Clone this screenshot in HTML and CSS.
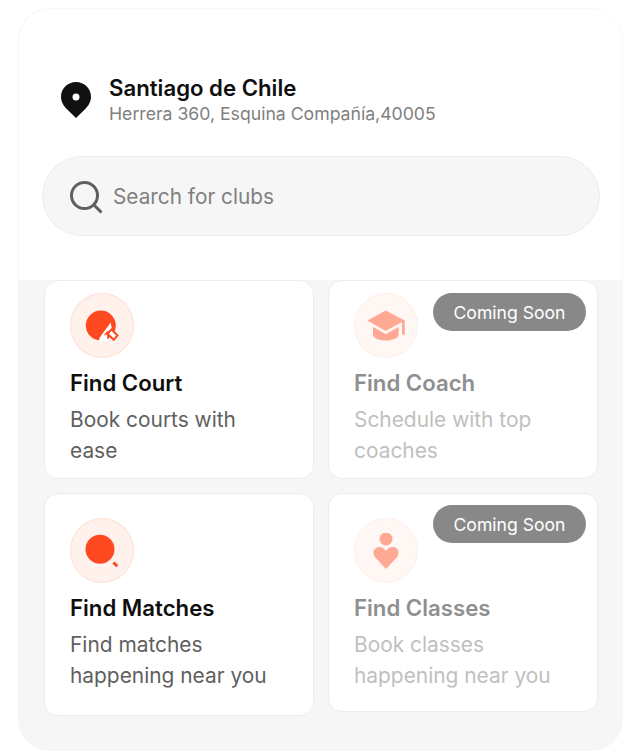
FILE: index.html
```html
<!DOCTYPE html>
<html lang="en">
<head>
<meta charset="utf-8">
<title>Find clubs</title>
<link rel="stylesheet" href="styles.css">
</head>
<body>
<main class="frame">
  <header class="top">
    <div class="location">
      <svg class="pin" width="30" height="36" viewBox="0 0 30 36"><path fill="#111" fill-rule="evenodd" d="M15 0C6.700 0 0 6.600 0 14.700c0 5 2.600 9.100 6 12.600L15 36l9-8.700c3.400-3.500 6-7.600 6-12.600C30 6.600 23.300 0 15 0Zm0 11.500a3.500 3.500 0 1 1 0 7 3.500 3.500 0 0 1 0-7Z"/></svg>
      <div class="place">
        <div class="city">Santiago de Chile</div>
        <div class="address">Herrera 360, Esquina Compañía,40005</div>
      </div>
    </div>
    <div class="search">
      <svg class="search-icon" width="33" height="33" viewBox="0 0 33 33"><circle cx="14.500" cy="14.500" r="13" fill="none" stroke="#5f5f5f" stroke-width="3"/><path d="M24 24l7.500 7.500" stroke="#5f5f5f" stroke-width="3" fill="none"/></svg>
      <span class="placeholder">Search for clubs</span>
    </div>
  </header>
  <section class="grid">
    <article class="card first">
      <div class="icon"><svg width="36" height="36" viewBox="0 0 36 36"><circle cx="16.800" cy="17.500" r="15" fill="#ff4a21"/><path fill="#fff" d="M15.700 29.500 26.700 14.500 27.800 21 23 26.500 23.300 33 15 33Z"/><path fill="#ff4a21" d="M19.500 27.500 24 22.500 24.800 24.500 22 27Z"/><path fill="#fff" stroke="#ff4a21" stroke-width="2" stroke-linejoin="miter" d="m27.500 21.500 6 6-3.800 4.300-6.200-6Z"/></svg></div>
      <h2 class="title">Find Court</h2>
      <p class="desc">Book courts with ease</p>
    </article>
    <article class="card first off">
      <span class="badge">Coming Soon</span>
      <div class="icon"><svg width="40" height="36" viewBox="0 0 40 36"><path fill="#ff4a21" d="M19.700 2.500 1.300 12.500 19.700 23l16.300-9v12.800h2.800V12.500Z"/><path fill="#ff4a21" d="M7 19v7.500c0 3.500 6 6 12.700 6s13-2.500 13-6V19l-13 7Z"/></svg></div>
      <h2 class="title">Find Coach</h2>
      <p class="desc">Schedule with top coaches</p>
    </article>
    <article class="card">
      <div class="icon"><svg width="36" height="36" viewBox="0 0 36 36"><circle cx="16" cy="16.200" r="14.500" fill="#ff4a21"/><path d="m29.500 29.500 3.800 3.800" stroke="#ff4a21" stroke-width="3"/></svg></div>
      <h2 class="title">Find Matches</h2>
      <p class="desc">Find matches happening near you</p>
    </article>
    <article class="card off short">
      <span class="badge badge-low">Coming Soon</span>
      <div class="icon"><svg width="26" height="36" viewBox="0 0 26 36"><circle cx="13" cy="6" r="6.500" fill="#ff4a21"/><path fill="#ff4a21" d="M13 36 2.800 25C-.5 21.500 0 17.500 2.500 15.500c3-2.300 7.500-2 10.500 2.500 3-4.500 7.500-4.800 10.500-2.500C26 17.500 26.500 21.500 23.200 25Z"/></svg></div>
      <h2 class="title">Find Classes</h2>
      <p class="desc">Book classes happening near you</p>
    </article>
  </section>
</main>
</body>
</html>
```

FILE: styles.css
```css
* { box-sizing: border-box; }
html, body { margin: 0; padding: 0; background: #fff; }
body { font-family: Inter, "Liberation Sans", sans-serif; }

.frame {
  width: 605px;
  height: 743px;
  margin: 8px 0 0 18px;
  background: #f6f6f6;
  border-radius: 32px;
  overflow: hidden;
}

.top {
  height: 272px;
  background: #fff;
  padding: 69px 0 0 24px;
  border-radius: 32px 32px 0 0;
  box-shadow: inset 1px 1px 0 #f8f8f8, inset -1px 0 0 #f8f8f8;
}

.location { display: flex; align-items: center; gap: 18px; padding-left: 19px; height: 46px; }
.pin { flex: none; }
.city { font-size: 22.200px; font-weight: 600; line-height: 28px; color: #0f0f0f; }
.address { font-size: 17.650px; line-height: 24px; color: #808080; }

.search {
  display: flex;
  align-items: center;
  gap: 10px;
  width: 558px;
  height: 80px;
  margin-top: 33px;
  padding-left: 27px;
  background: #f6f6f6;
  border: 1px solid #ebebeb;
  border-radius: 40px;
}
.search-icon { flex: none; margin-top: 2px; }
.placeholder { font-size: 20.800px; color: #808080; }

.grid {
  display: grid;
  grid-template-columns: 270px 270px;
  gap: 14px;
  align-items: start;
  padding-left: 26px;
}

.card {
  position: relative;
  background: #fff;
  border: 1px solid #ededed;
  border-radius: 14px;
  padding: 24px 25px 24px;
}
.card.first { padding-top: 12px; padding-bottom: 12px; }
.card.short { padding-bottom: 20px; }

.icon {
  display: flex;
  align-items: center;
  justify-content: center;
  width: 64px;
  height: 65px;
  border-radius: 50%;
  background: #fff1ec;
  border: 1px solid #ffdfd3;
}

.title { margin: 11px 0 0; font-size: 22.200px; font-weight: 600; line-height: 28px; color: #0f0f0f; }
.desc { margin: 7px 0 0; font-size: 20.900px; line-height: 31px; color: #5f5f5f; }

.off .icon { background: #fff7f4; border-color: #ffefe9; }
.off .icon svg { opacity: 0.45; }
.off .title { color: #8f8f8f; }
.off .desc { color: #bfbfbf; }

.badge {
  position: absolute;
  top: 12px;
  right: 11px;
  width: 153px;
  height: 38px;
  display: flex;
  align-items: center;
  justify-content: center;
  border-radius: 19px;
  background: #888;
  color: #fff;
  font-size: 17.600px;
}
.badge-low { top: 11px; }
```
